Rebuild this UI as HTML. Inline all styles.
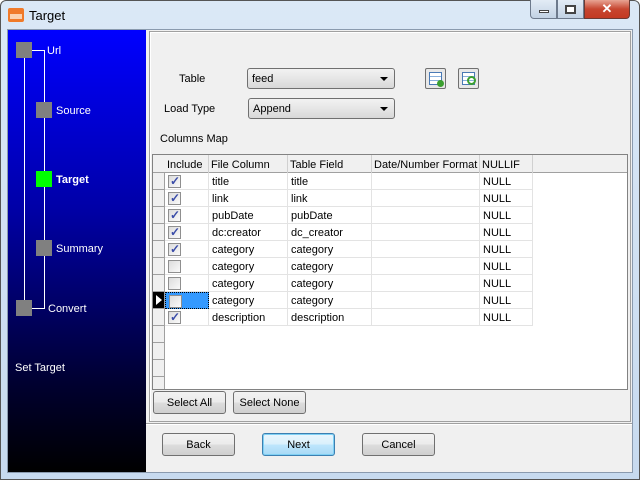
<!DOCTYPE html>
<html><head><style>
*{box-sizing:border-box;margin:0;padding:0}
body{width:640px;height:480px;overflow:hidden;font-family:"Liberation Sans",sans-serif;font-size:11px;color:#000;background:#fff;position:relative}
.a{position:absolute}
.win{left:0;top:0;width:640px;height:480px;background:linear-gradient(#dbe8f6,#c7daef);border:1px solid #555;border-radius:6px 6px 0 0}
.sq{position:absolute;width:16px;height:16px;background:#808080}
.ln{position:absolute;background:#fff}
.wt{position:absolute;color:#fff;font-size:11px}
.btn{position:absolute;height:23px;border:1px solid #707070;border-radius:3px;background:linear-gradient(#f2f2f2 0%,#ebebeb 50%,#dddddd 51%,#cfcfcf 100%);text-align:center;line-height:23px;font-size:11px}
.combo{position:absolute;height:21px;border:1px solid #707070;border-radius:3px;background:linear-gradient(#f2f2f2,#e6e6e6 50%,#d8d8d8);padding-left:4px;line-height:21px}
.combo:after{content:"";position:absolute;right:6px;top:8px;border:4px solid transparent;border-top:4px solid #000;border-bottom:0}
.cell{position:absolute;height:17px;line-height:18px;padding-left:3px;border-right:1px solid #e3e3e3;border-bottom:1px solid #e3e3e3}
.cb{position:absolute;width:13px;height:13px;border:1px solid #8f8f8f;background:linear-gradient(135deg,#dcdcdc,#fafafa);left:3px;top:2px}
.ck:after{content:"✓";position:absolute;left:1px;top:-4px;font-size:12px;color:#3a4ca8;font-weight:bold}
.rh{position:absolute;left:0;width:12px;height:17px;border-bottom:1px solid #a0a0a0;border-right:1px solid #a0a0a0;background:#f0f0f0}
</style></head><body>
<div class="a win"></div>
<div class="a" style="left:8px;top:8px;width:16px;height:14px;background:#f07a2a;border-radius:2px"></div>
<div class="a" style="left:10px;top:14px;width:12px;height:5px;background:#fbd2b0"></div>
<div class="a" style="left:29px;top:8px;font-size:13px">Target</div>
<div class="a" style="left:530px;top:0;width:27px;height:19px;border:1px solid #6d7a8c;border-top:0;border-radius:0 0 0 4px;background:linear-gradient(#e3ecf6,#c2d2e4)"></div>
<div class="a" style="left:539px;top:10px;width:10px;height:3px;background:#fff;border:1px solid #444"></div>
<div class="a" style="left:557px;top:0;width:27px;height:19px;border:1px solid #6d7a8c;border-top:0;background:linear-gradient(#e3ecf6,#c2d2e4)"></div>
<div class="a" style="left:565px;top:5px;width:11px;height:9px;border:2px solid #444;background:#fff"></div>
<div class="a" style="left:584px;top:0;width:46px;height:19px;border:1px solid #6d3a33;border-top:0;border-radius:0 0 4px 0;background:linear-gradient(#e8a493,#c74630 50%,#c33a23);color:#fff;font-weight:bold;text-align:center;line-height:18px;font-size:13px">✕</div>

<div class="a" style="left:7px;top:29px;width:626px;height:444px;background:#f0f0f0;border:1px solid #8a9aae"></div>
<div class="a" style="left:8px;top:30px;width:138px;height:442px;background:linear-gradient(#0000ff,#0000a8 40%,#000030 80%,#000)"></div>
<div class="ln" style="left:24px;top:58px;width:1px;height:242px"></div>
<div class="ln" style="left:44px;top:50px;width:1px;height:259px"></div>
<div class="ln" style="left:32px;top:50px;width:12px;height:1px"></div>
<div class="ln" style="left:32px;top:308px;width:12px;height:1px"></div>
<div class="sq" style="left:16px;top:42px"></div>
<div class="sq" style="left:36px;top:102px"></div>
<div class="sq" style="left:36px;top:171px;background:#00ff00"></div>
<div class="sq" style="left:36px;top:240px"></div>
<div class="sq" style="left:16px;top:300px"></div>
<div class="wt" style="left:47px;top:45px">Url</div>
<div class="wt" style="left:56px;top:105px">Source</div>
<div class="wt" style="left:56px;top:174px;font-weight:bold">Target</div>
<div class="wt" style="left:56px;top:243px">Summary</div>
<div class="wt" style="left:48px;top:303px">Convert</div>
<div class="wt" style="left:15px;top:362px">Set Target</div>

<div class="a" style="left:149px;top:31px;width:482px;height:391px;border:1px solid #a0a0a0;box-shadow:inset 1px 1px 0 #fff"></div>
<div class="a" style="left:146px;top:424px;width:486px;height:1px;background:#fff"></div>
<div class="a" style="left:146px;top:423px;width:486px;height:1px;background:#a0a0a0"></div>
<div class="a" style="left:179px;top:73px">Table</div>
<div class="a" style="left:164px;top:103px">Load Type</div>
<div class="a" style="left:160px;top:133px">Columns Map</div>
<div class="combo" style="left:247px;top:68px;width:148px">feed</div>
<div class="combo" style="left:248px;top:98px;width:147px">Append</div>
<div class="a" style="left:425px;top:68px;width:21px;height:21px;border:1px solid #707070;border-radius:2px;background:#e8e8e8"><div class="a" style="left:3px;top:3px;width:13px;height:13px;border:1px solid #4a7ab5;background:repeating-linear-gradient(#fff 0 3px,#8ab0dc 3px 4px)"></div><div class="a" style="left:11px;top:11px;width:7px;height:7px;border-radius:50%;background:#3ca030"></div></div>
<div class="a" style="left:458px;top:68px;width:21px;height:21px;border:1px solid #707070;border-radius:2px;background:#e8e8e8"><div class="a" style="left:3px;top:3px;width:13px;height:13px;border:1px solid #4a7ab5;background:repeating-linear-gradient(#fff 0 3px,#8ab0dc 3px 4px)"></div><div class="a" style="left:8px;top:7px;width:9px;height:9px;border-radius:50%;border:2px solid #3ca030"></div></div>

<div class="a" style="left:152px;top:154px;width:476px;height:236px;border:1px solid #828282;background:#fff;overflow:hidden">
<div class="a" style="left:0;top:0;width:12px;height:235px;background:#f0f0f0;border-right:1px solid #a0a0a0"></div>
<div class="a" style="left:0;top:0;width:476px;height:18px;background:#f0f0f0;border-bottom:1px solid #a0a0a0"></div>
<div class="a" style="left:14px;top:4px">Include</div><div class="a" style="left:58px;top:4px">File Column</div><div class="a" style="left:137px;top:4px">Table Field</div><div class="a" style="left:221px;top:4px">Date/Number Format</div><div class="a" style="left:329px;top:4px">NULLIF</div>
<div class="a" style="left:55px;top:0;width:1px;height:18px;background:#d0d0d0"></div><div class="a" style="left:134px;top:0;width:1px;height:18px;background:#d0d0d0"></div><div class="a" style="left:218px;top:0;width:1px;height:18px;background:#d0d0d0"></div><div class="a" style="left:326px;top:0;width:1px;height:18px;background:#d0d0d0"></div><div class="a" style="left:379px;top:0;width:1px;height:18px;background:#d0d0d0"></div>

<div class="a" style="top:18px;left:0;width:475px">
<div class="a" style="top:0;left:0"><div class="rh" style="top:0"></div><div class="cell" style="left:12px;width:44px"><div class="cb ck"></div></div><div class="cell" style="left:56px;width:79px">title</div><div class="cell" style="left:135px;width:84px">title</div><div class="cell" style="left:219px;width:108px"></div><div class="cell" style="left:327px;width:53px">NULL</div></div>
<div class="a" style="top:17px;left:0"><div class="rh"></div><div class="cell" style="left:12px;width:44px"><div class="cb ck"></div></div><div class="cell" style="left:56px;width:79px">link</div><div class="cell" style="left:135px;width:84px">link</div><div class="cell" style="left:219px;width:108px"></div><div class="cell" style="left:327px;width:53px">NULL</div></div>
<div class="a" style="top:34px;left:0"><div class="rh"></div><div class="cell" style="left:12px;width:44px"><div class="cb ck"></div></div><div class="cell" style="left:56px;width:79px">pubDate</div><div class="cell" style="left:135px;width:84px">pubDate</div><div class="cell" style="left:219px;width:108px"></div><div class="cell" style="left:327px;width:53px">NULL</div></div>
<div class="a" style="top:51px;left:0"><div class="rh"></div><div class="cell" style="left:12px;width:44px"><div class="cb ck"></div></div><div class="cell" style="left:56px;width:79px">dc:creator</div><div class="cell" style="left:135px;width:84px">dc_creator</div><div class="cell" style="left:219px;width:108px"></div><div class="cell" style="left:327px;width:53px">NULL</div></div>
<div class="a" style="top:68px;left:0"><div class="rh"></div><div class="cell" style="left:12px;width:44px"><div class="cb ck"></div></div><div class="cell" style="left:56px;width:79px">category</div><div class="cell" style="left:135px;width:84px">category</div><div class="cell" style="left:219px;width:108px"></div><div class="cell" style="left:327px;width:53px">NULL</div></div>
<div class="a" style="top:85px;left:0"><div class="rh"></div><div class="cell" style="left:12px;width:44px"><div class="cb"></div></div><div class="cell" style="left:56px;width:79px">category</div><div class="cell" style="left:135px;width:84px">category</div><div class="cell" style="left:219px;width:108px"></div><div class="cell" style="left:327px;width:53px">NULL</div></div>
<div class="a" style="top:102px;left:0"><div class="rh"></div><div class="cell" style="left:12px;width:44px"><div class="cb"></div></div><div class="cell" style="left:56px;width:79px">category</div><div class="cell" style="left:135px;width:84px">category</div><div class="cell" style="left:219px;width:108px"></div><div class="cell" style="left:327px;width:53px">NULL</div></div>
<div class="a" style="top:119px;left:0"><div class="rh" style="background:#000"><div class="a" style="left:3px;top:3px;border:5px solid transparent;border-left:6px solid #fff;border-right:0"></div></div><div class="cell" style="left:12px;width:44px;background:#3399ff;border:1px dotted #000"><div class="cb"></div></div><div class="cell" style="left:56px;width:79px">category</div><div class="cell" style="left:135px;width:84px">category</div><div class="cell" style="left:219px;width:108px"></div><div class="cell" style="left:327px;width:53px">NULL</div></div>
<div class="a" style="top:136px;left:0"><div class="rh"></div><div class="cell" style="left:12px;width:44px"><div class="cb ck"></div></div><div class="cell" style="left:56px;width:79px">description</div><div class="cell" style="left:135px;width:84px">description</div><div class="cell" style="left:219px;width:108px"></div><div class="cell" style="left:327px;width:53px">NULL</div></div>
<div class="a" style="top:153px;left:0"><div class="rh"></div></div>
<div class="a" style="top:170px;left:0"><div class="rh"></div></div>
<div class="a" style="top:187px;left:0"><div class="rh"></div></div>
</div>
</div>
<div class="btn" style="left:153px;top:391px;width:73px">Select All</div>
<div class="btn" style="left:233px;top:391px;width:73px">Select None</div>
<div class="btn" style="left:162px;top:433px;width:73px">Back</div>
<div class="btn" style="left:262px;top:433px;width:73px;border-color:#3c7fb1;background:linear-gradient(#eaf6fd,#d9f0fc 50%,#bee6fd 51%,#a7d9f5);box-shadow:inset 0 0 0 1px #7fd0f4">Next</div>
<div class="btn" style="left:362px;top:433px;width:73px">Cancel</div>
</body></html>
